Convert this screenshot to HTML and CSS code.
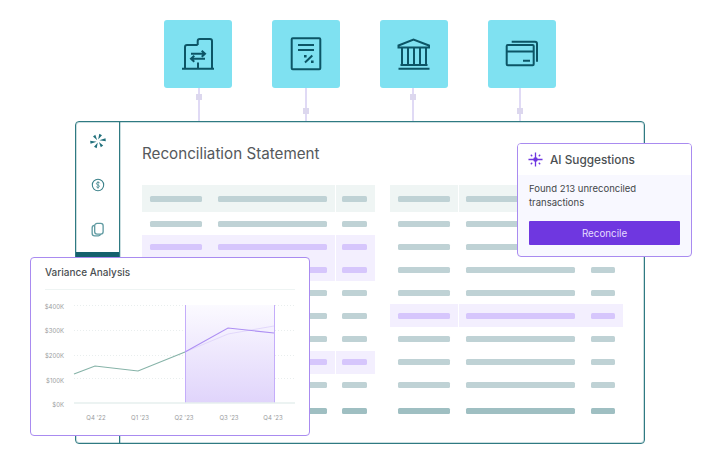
FILE: index.html
```html
<!DOCTYPE html>
<html lang="en">
<head>
    <meta charset="UTF-8">
    <meta name="viewport" content="width=device-width, initial-scale=1.0">
    <title>Reconciliation Statement</title>
    <link rel="stylesheet" href="styles.css">
</head>
<body>
    <div class="stage">
        <div class="tiles">
            <div class="tile">
                <svg viewBox="0 0 40 40" class="tile-icon">
                    <path d="M4 34.700H36M7 34.700V13a2 2 0 0 1 2-2H19.700M19.700 11V7a2 2 0 0 1 2-2H32a2 2 0 0 1 2 2V34.700M20 28.500v6.200"/>
                    <path d="M13 19.700H27M23.700 16.700l3.300 3-3.300 3M27 24.700H13M16.300 21.700l-3.300 3 3.300 3"/>
                </svg>
            </div>
            <div class="tile">
                <svg viewBox="0 0 40 40" class="tile-icon">
                    <rect x="5.700" y="4.300" width="28.600" height="31" rx="1"/>
                    <path d="M12 11H28M12 16H28M19 28.500L26.300 21.500"/>
                    <path class="dot" d="M18 21h2.600v2.600H18zM25 26.500h2.600v2.600H25z"/>
                </svg>
            </div>
            <div class="tile">
                <svg viewBox="0 0 40 40" class="tile-icon">
                    <path d="M4.500 13.500V11.500L19.500 5.500L35 11.500V13.500H4.500Z"/>
                    <path d="M8 13.500V31M14 13.500V31M20 13.500V31M26 13.500V31M32 13.500V31M6.500 31H33.500M4.500 34.700H35.500"/>
                </svg>
            </div>
            <div class="tile">
                <svg viewBox="0 0 40 40" class="tile-icon">
                    <rect x="4.700" y="11" width="27" height="20.300" rx="1"/>
                    <path d="M4.700 17.500H31.700M21 26.700H28M9.700 7.700H33a2 2 0 0 1 2 2V27.700"/>
                </svg>
            </div>
        </div>

        <div class="wires">
            <div class="wire"><span class="knot"></span></div>
            <div class="wire"><span class="knot knot-low"></span></div>
            <div class="wire"><span class="knot"></span></div>
            <div class="wire"><span class="knot knot-low"></span></div>
        </div>

        <div class="frame">
            <div class="sidebar">
                <div class="nav-item">
                    <svg viewBox="0 0 16 16" class="nav-logo">
                        <path d="M7.200 7.200L3 3.500L5.300 1.800ZM8.200 6.600L9.300 0.800L12 2.200ZM9.300 7.300L15.500 5.300L15.800 8.300ZM8.900 8.900L13.200 12.500L10.800 14.200ZM7.800 9.400L6.700 15.200L4 13.800ZM6.700 8.700L0.500 10.700L0.200 7.700Z"/>
                    </svg>
                </div>
                <div class="nav-item">
                    <svg viewBox="0 0 16 16" class="nav-icon">
                        <circle cx="8" cy="8" r="6.500"/>
                        <path d="M10 6a1.700 1.400 0 0 0-2-1.100C6.500 4.900 5.900 6 6.300 7c.4.800 1.400.800 2.200 1.100 1 .4 1.300 1.300.9 2-.5.900-2.500 1-3.300-.2M8 3.800V12.200" class="nav-thin"/>
                    </svg>
                </div>
                <div class="nav-item">
                    <svg viewBox="0 0 16 16" class="nav-icon nav-copy">
                        <rect x="5" y="1.500" width="9" height="11.500" rx="2.500"/>
                        <path d="M5 3.300C3.200 3.600 2.300 4.500 2.300 6V12c0 1.700 1.100 2.700 2.700 2.700H9c1.300 0 2.100-.6 2.400-1.700"/>
                    </svg>
                </div>
                <div class="nav-active"></div>
            </div>

            <div class="content">
                <h1 class="title">Reconciliation Statement</h1>
                <div class="tables">
                    <div class="sheet sheet-left">
                        <div class="row row-head"><div class="cell"><i></i></div><div class="cell"><i></i></div><div class="cell seam"><i></i></div></div>
                        <div class="row"><div class="cell"><i></i></div><div class="cell"><i></i></div><div class="cell"><i></i></div></div>
                        <div class="row row-match"><div class="cell"><i></i></div><div class="cell"><i></i></div><div class="cell seam"><i></i></div></div>
                        <div class="row row-match"><div class="cell"><i></i></div><div class="cell"><i></i></div><div class="cell seam"><i></i></div></div>
                        <div class="row"><div class="cell"><i></i></div><div class="cell"><i></i></div><div class="cell"><i></i></div></div>
                        <div class="row"><div class="cell"><i></i></div><div class="cell"><i></i></div><div class="cell"><i></i></div></div>
                        <div class="row"><div class="cell"><i></i></div><div class="cell"><i></i></div><div class="cell"><i></i></div></div>
                        <div class="row row-match"><div class="cell"><i></i></div><div class="cell"><i></i></div><div class="cell seam"><i></i></div></div>
                        <div class="row"><div class="cell"><i></i></div><div class="cell"><i></i></div><div class="cell"><i></i></div></div>
                        <div class="row row-total"><div class="cell"><i></i></div><div class="cell"><i></i></div><div class="cell"><i></i></div></div>
                    </div>
                    <div class="sheet sheet-right">
                        <div class="row row-head"><div class="cell"><i></i></div><div class="cell seam"><i></i></div><div class="cell"><i></i></div></div>
                        <div class="row"><div class="cell"><i></i></div><div class="cell"><i></i></div><div class="cell"><i></i></div></div>
                        <div class="row"><div class="cell"><i></i></div><div class="cell"><i></i></div><div class="cell"><i></i></div></div>
                        <div class="row"><div class="cell"><i></i></div><div class="cell"><i></i></div><div class="cell"><i></i></div></div>
                        <div class="row"><div class="cell"><i></i></div><div class="cell"><i></i></div><div class="cell"><i></i></div></div>
                        <div class="row row-match"><div class="cell"><i></i></div><div class="cell seam"><i></i></div><div class="cell"><i></i></div></div>
                        <div class="row"><div class="cell"><i></i></div><div class="cell"><i></i></div><div class="cell"><i></i></div></div>
                        <div class="row"><div class="cell"><i></i></div><div class="cell"><i></i></div><div class="cell"><i></i></div></div>
                        <div class="row"><div class="cell"><i></i></div><div class="cell"><i></i></div><div class="cell"><i></i></div></div>
                        <div class="row row-total"><div class="cell"><i></i></div><div class="cell"><i></i></div><div class="cell"><i></i></div></div>
                    </div>
                </div>
            </div>
        </div>

        <div class="ai-card">
            <div class="ai-head">
                <svg viewBox="0 0 16 16" class="ai-icon">
                    <path d="M8 0.500V15.500M0.500 8H15.500M6.200 6.200L9.800 9.800M9.800 6.200L6.200 9.800"/>
                    <path d="M3 3L4.500 4.500M13 3L11.500 4.500M3 13L4.500 11.500M13 13L11.500 11.500"/>
                </svg>
                <span>AI Suggestions</span>
            </div>
            <div class="ai-body">
                <p>Found 213 unreconciled transactions</p>
                <button class="ai-button">Reconcile</button>
            </div>
        </div>

        <div class="chart-card">
            <div class="chart-title">Variance Analysis</div>
            <svg viewBox="0 0 280 146" class="chart">
                <defs>
                    <linearGradient id="band" x1="0" y1="0" x2="0" y2="1">
                        <stop offset="0" stop-color="#fbfaff"/>
                        <stop offset="1" stop-color="#e0d4fb"/>
                    </linearGradient>
                </defs>
                <g class="grid">
                    <path d="M44 16.500H265M44 41.500H265M44 66.500H265M44 89.500H265"/>
                </g>
                <rect x="155.500" y="16" width="89.500" height="98" fill="url(#band)"/>
                <path class="band-edge" d="M155.500 16V114M244.500 16V114"/>
                <path class="axis" d="M44 114H265"/>
                <path class="line-forecast" d="M155 63L198 45L244 37"/>
                <path class="line-actual" d="M44 85L65 77L108 82L155 63"/>
                <path class="line-new" d="M155 63L198 39L244 44"/>
                <g class="y-labels">
                    <text x="34" y="19.500">$400K</text>
                    <text x="34" y="44">$300K</text>
                    <text x="34" y="69">$200K</text>
                    <text x="34" y="93.500">$100K</text>
                    <text x="34" y="118">$0K</text>
                </g>
                <g class="x-labels">
                    <text x="66" y="130.500">Q4 '22</text>
                    <text x="110" y="130.500">Q1 '23</text>
                    <text x="154" y="130.500">Q2 '23</text>
                    <text x="199" y="130.500">Q3 '23</text>
                    <text x="243" y="130.500">Q4 '23</text>
                </g>
            </svg>
        </div>
    </div>
</body>
</html>
```

FILE: styles.css
```css
html, body {
    margin: 0;
    padding: 0;
    background: white;
}
body {
    font-family: Inter, "Liberation Sans", sans-serif;
    color: #4a4f52;
}
.stage {
    position: relative;
    width: 720px;
    height: 460px;
    padding-top: 20px;
    box-sizing: border-box;
    overflow: hidden;
}

/* top tiles */
.tiles {
    display: flex;
    gap: 40px;
    margin-left: 164px;
}
.tile {
    width: 68px;
    height: 68px;
    background: #7fe1f1;
    border-radius: 3px;
    display: flex;
    align-items: center;
    justify-content: center;
}
.tile-icon {
    width: 40px;
    height: 40px;
    fill: none;
    stroke: #0c5566;
    stroke-width: 2;
}
.tile-icon .dot {
    fill: #0c5566;
    stroke: none;
}
.wires {
    display: flex;
    gap: 105px;
    height: 33px;
    margin-left: 198px;
}
.wire {
    width: 2px;
    background: #e0daf5;
    display: flex;
    flex-direction: column;
    align-items: center;
}
.knot {
    flex: none;
    width: 6px;
    height: 6px;
    margin-top: 6px;
    background: #dcd7ee;
}
.knot-low {
    margin-top: 20px;
}

/* main frame */
.frame {
    display: flex;
    width: 570px;
    height: 323px;
    margin-left: 75px;
    box-sizing: border-box;
    border: 1px solid #2f7a82;
    border-radius: 4px;
    background: white;
    box-shadow: inset 0 0 0 1px rgba(47, 122, 130, 0.25);
}
.sidebar {
    flex: none;
    width: 43px;
    border-right: 1px solid #2f7a82;
    box-shadow: 1px 0 0 rgba(47, 122, 130, 0.25);
    display: flex;
    flex-direction: column;
    align-items: center;
    gap: 28px;
    padding-top: 11px;
}
.nav-item {
    height: 16px;
    display: flex;
    align-items: center;
    justify-content: center;
}
.nav-logo {
    width: 16px;
    height: 16px;
    fill: #21707c;
}
.nav-icon {
    width: 14px;
    height: 14px;
    fill: none;
    stroke: #3a8089;
    stroke-width: 1.2;
}
.nav-copy {
    width: 15px;
    height: 15px;
    stroke: #5f9aa1;
    stroke-width: 1.4;
}
.nav-thin {
    stroke-width: 0.9;
}
.nav-active {
    flex: none;
    width: 100%;
    height: 30px;
    margin-top: -13px;
    background: #14616d;
}
.content {
    flex: 1;
    padding-left: 22px;
}
.title {
    margin: 22px 0 0;
    font-size: 15.2px;
    line-height: 20px;
    font-weight: 400;
    color: #55595c;
}
.tables {
    display: flex;
    gap: 15px;
    margin-top: 21px;
}
.sheet {
    width: 233px;
}
.row {
    display: grid;
    grid-template-columns: 68px 125px 40px;
    height: 23.1px;
    align-items: stretch;
}
.row-head {
    height: 27px;
}
.row-total {
    height: 27.8px;
}
.cell {
    display: flex;
    align-items: center;
    padding: 0 8px;
    box-sizing: border-box;
}
.cell i {
    display: block;
    width: 100%;
    height: 6px;
    border-radius: 1.5px;
    background: #bfd2d5;
}
.row-head .cell {
    background: #eff5f4;
}
.row-total .cell i {
    background: #9fbfc2;
}
.row-match .cell {
    background: #f3effe;
}
.row-match .cell i {
    background: #d6c6fc;
}
.cell.seam {
    border-left: 1px solid white;
    padding-left: 7px;
}
.sheet-left .cell:last-child {
    padding-left: 7px;
}
.sheet-left .cell.seam {
    padding-left: 6px;
}

/* cards on top */
.ai-card {
    position: absolute;
    left: 517px;
    top: 143px;
    width: 175px;
    height: 114px;
    box-sizing: border-box;
    border: 1px solid #a98bf0;
    border-radius: 4px;
    background: #f8f8ff;
    overflow: hidden;
}
.ai-head {
    height: 31px;
    background: white;
    display: flex;
    align-items: center;
    gap: 7px;
    padding-left: 10px;
    font-size: 11.8px;
    font-weight: 500;
    color: #4a4f52;
}
.ai-icon {
    width: 15px;
    height: 15px;
    fill: none;
    stroke: #6f37e0;
    stroke-width: 1.4;
}
.ai-body {
    padding: 7px 11px 0;
}
.ai-body p {
    margin: 0;
    font-size: 9.5px;
    line-height: 14px;
    width: 130px;
    color: #43474a;
}
.ai-button {
    display: block;
    width: 151px;
    height: 24px;
    margin-top: 11px;
    padding: 0;
    border: none;
    border-radius: 1px;
    background: #6f37e0;
    color: #e4dbff;
    font-family: inherit;
    font-size: 9.8px;
}
.chart-card {
    position: absolute;
    left: 30px;
    top: 257px;
    width: 280px;
    height: 179px;
    box-sizing: border-box;
    border: 1px solid #a98bf0;
    border-radius: 4px;
    background: white;
}
.chart-title {
    margin: 0 14px;
    height: 31px;
    line-height: 29px;
    font-size: 10px;
    font-weight: 500;
    color: #4a4f52;
    border-bottom: 1px solid #eef4f3;
}
.chart {
    display: block;
    width: 280px;
    height: 146px;
    margin: -1px 0 0 -1px;
}
.chart path {
    fill: none;
}
.grid path {
    stroke: #e9eeee;
    stroke-width: 1;
    stroke-dasharray: 1 2;
}
.axis {
    stroke: #e6efee;
    stroke-width: 1.5;
}
.band-edge {
    stroke: #c4adfa;
    stroke-width: 1;
}
.line-actual {
    stroke: #86b3a8;
    stroke-width: 1.2;
}
.line-new {
    stroke: #ad8ff3;
    stroke-width: 1.1;
}
.line-forecast {
    stroke: #e2d8fb;
    stroke-width: 1;
}
.y-labels text,
.x-labels text {
    font-size: 6px;
    fill: #9a9c9e;
}
.y-labels text {
    text-anchor: end;
}
.x-labels text {
    text-anchor: middle;
}
```
